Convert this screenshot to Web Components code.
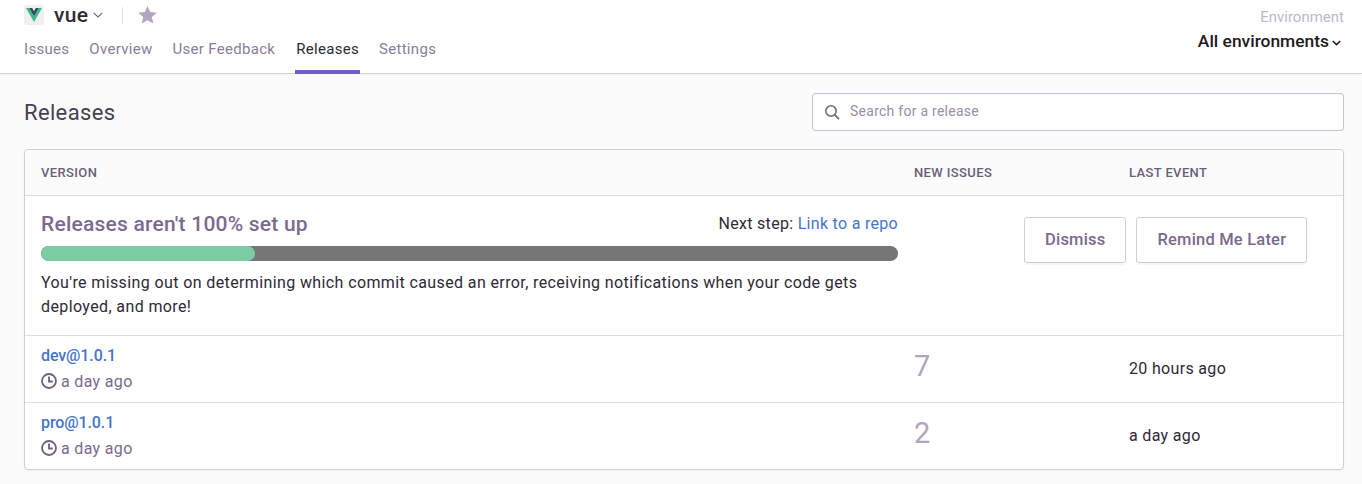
<!DOCTYPE html>
<html>
<head>
<meta charset="utf-8">
<title>Releases</title>
<style>
  html, body { margin:0; height:100%; overflow:hidden; }
  body { background:#fbfbfc; font-family:Roboto,"Liberation Sans",sans-serif; color:#2f2936; }
</style>
</head>
<body>
<project-header></project-header>
<main-content>
  <release-progress slot="progress"></release-progress>
  <release-row slot="rows" version="dev@1.0.1" age="a day ago" issues="7" last="20 hours ago"></release-row>
  <release-row slot="rows" version="pro@1.0.1" age="a day ago" issues="2" last="a day ago"></release-row>
</main-content>

<script>
const defineShadow = (name, html, setup) => {
  customElements.define(name, class extends HTMLElement {
    constructor() {
      super();
      this.attachShadow({mode:"open"}).innerHTML = html;
      if (setup) setup(this);
    }
  });
};

defineShadow("project-header", `
  <style>
    :host { display:flex; justify-content:space-between; height:73px; padding:0 18px 0 24px; background:#fff; border-bottom:1px solid #d6d0dc; box-shadow:0 1px 2px rgba(0,0,0,.04); }
    .left { display:flex; flex-direction:column; }
    .title { display:flex; align-items:center; height:20px; margin-top:5px; }
    .logo { width:20px; height:20px; border-radius:3px; background:#efeef3; display:flex; align-items:center; justify-content:center; }
    .name { margin-left:10px; font-size:21px; font-weight:500; color:#2f2936; line-height:20px; letter-spacing:.3px; }
    .caret { margin-left:5px; }
    .sep { width:1px; height:17px; background:#e4e1e8; margin:0 15px 0 19px; }
    nav { display:flex; gap:20px; margin-top:12px; }
    nav a { display:block; height:37px; line-height:24px; font-size:15px; color:#8a7c9c; white-space:nowrap; letter-spacing:.3px; box-sizing:border-box; }
    nav a.on { color:#2f2936; border-bottom:4px solid #6c5fc7; padding:0 1px; margin-right:-1px; }
    .env { text-align:right; display:flex; flex-direction:column; align-items:flex-end; }
    .env-label { font-size:15px; color:#c1b8cc; line-height:18px; margin-top:8px; }
    .env-val { display:flex; align-items:center; font-size:17.400px; font-weight:500; color:#1d1a21; line-height:20px; margin-top:5px; margin-right:3px; }
    .env-val svg { margin-left:3px; margin-top:3px; }
  </style>
  <div class="left">
    <div class="title">
      <span class="logo">
        <svg width="16" height="14" viewBox="0 0 16 14"><path d="M0 0h3.2L8 8.2 12.800 0H16L8 14z" fill="#41b883"/><path d="M3.200 0h3L8 3.200 9.800 0h3L8 8.200z" fill="#35495e"/></svg>
      </span>
      <span class="name">vue</span>
      <svg class="caret" width="10" height="6" viewBox="0 0 10 6"><path d="M.7.8 5 5 9.300.8" fill="none" stroke="#6f6378" stroke-width="1.100"/></svg>
      <span class="sep"></span>
      <svg width="19" height="18" viewBox="0 0 19 18"><path d="M9.500 0l2.700 6.100 6.600.6-5 4.400 1.500 6.500-5.800-3.400-5.800 3.400 1.500-6.500-5-4.400 6.600-.6z" fill="#b1a5c0"/></svg>
    </div>
    <nav>
      <a>Issues</a><a>Overview</a><a>User Feedback</a><a class="on">Releases</a><a>Settings</a>
    </nav>
  </div>
  <div class="env">
    <div class="env-label">Environment</div>
    <div class="env-val">All environments<svg width="9" height="6" viewBox="0 0 9 6"><path d="M.8 1l3.700 3.600L8.200 1" fill="none" stroke="#1d1a21" stroke-width="1.500"/></svg></div>
  </div>
`);

defineShadow("search-box", `
  <style>
    :host { display:flex; align-items:center; width:530px; height:36px; background:#fff; border:1px solid #c9c2d2; border-radius:3px; box-shadow:inset 0 1px 2px rgba(0,0,0,.03); }
    svg { margin-left:11px; }
    span { margin-left:10px; font-size:14px; color:#9a8ea8; letter-spacing:.26px; position:relative; top:-1px; }
  </style>
  <svg width="16" height="16" viewBox="0 0 16 16"><circle cx="7" cy="7" r="5.200" fill="none" stroke="#756a80" stroke-width="1.600"/><path d="M10.800 10.800l3.700 3.900" stroke="#756a80" stroke-width="1.800" stroke-linecap="round"/></svg>
  <span>Search for a release</span>
`);

defineShadow("main-content", `
  <style>
    :host { display:block; padding:19px 18px 0 24px; }
    .top { display:flex; justify-content:space-between; align-items:center; height:38px; }
    h1 { margin:0; font-size:22px; font-weight:400; color:#493e54; letter-spacing:.35px; }
    .panel { margin-top:18px; background:#fff; border:1px solid #d3cdd9; border-radius:4px; box-shadow:0 1px 2px rgba(0,0,0,.05); }
    .head { display:grid; grid-template-columns:873px 215px 1fr; height:45px; align-items:center; padding-left:16px; background:#fbfbfc; border-bottom:1px solid #dedae3; border-radius:4px 4px 0 0; font-size:13px; font-weight:500; color:#6b5f78; letter-spacing:.38px; }
  </style>
  <div class="top"><h1>Releases</h1><search-box></search-box></div>
  <div class="panel">
    <div class="head"><span>VERSION</span><span>NEW ISSUES</span><span>LAST EVENT</span></div>
    <slot name="progress"></slot>
    <slot name="rows"></slot>
  </div>
`);

defineShadow("release-progress", `
  <style>
    :host { display:flex; height:139px; padding-left:16px; border-bottom:1px solid #e2dee7; box-sizing:content-box; }
    .col { width:857px; flex:none; }
    .top { display:flex; justify-content:space-between; align-items:center; margin-top:14px; height:28px; }
    h2 { margin:0; font-size:21px; font-weight:500; color:#7c6a8e; letter-spacing:.22px; }
    .next { font-size:16px; color:#2f2936; letter-spacing:.3px; position:relative; top:-1px; }
    .next a { color:#4674ca; }
    .bar { height:15px; margin-top:8px; border-radius:8px; background:#767676; overflow:hidden; }
    .fill { width:214px; height:100%; border-radius:8px; background:#7ccca5; }
    p { margin:10px 0 0; font-size:16px; line-height:24px; color:#2f2936; letter-spacing:.385px; }
    .actions { display:flex; gap:10px; margin:21px 0 0 126px; align-items:flex-start; }
  </style>
  <div class="col">
    <div class="top"><h2>Releases aren't 100% set up</h2><span class="next">Next step: <a>Link to a repo</a></span></div>
    <div class="bar"><div class="fill"></div></div>
    <p>You're missing out on determining which commit caused an error, receiving notifications when your code gets<br>deployed, and more!</p>
  </div>
  <div class="actions"><action-button>Dismiss</action-button><action-button>Remind Me Later</action-button></div>
`);

defineShadow("action-button", `
  <style>
    :host { display:flex; align-items:center; justify-content:center; height:44px; padding:0 20px; background:#fff; border:1px solid #d3cdd9; border-radius:3px; box-shadow:0 2px 1px rgba(0,0,0,.04); font-size:16.500px; font-weight:500; letter-spacing:.2px; color:#7c6a8e; white-space:nowrap; }
    span { position:relative; top:-1px; }
  </style>
  <span><slot></slot></span>
`);

defineShadow("release-row", `
  <style>
    :host { display:grid; grid-template-columns:873px 215px 1fr; height:66px; padding-left:16px; border-bottom:1px solid #e2dee7; align-items:center; }
    :host(:last-child) { border-bottom:0; }
    .v { font-size:16px; font-weight:500; color:#4674ca; line-height:20px; margin-top:-1px; letter-spacing:-.1px; }
    .age { display:flex; align-items:center; gap:4px; font-size:16px; color:#7c6a8e; line-height:20px; margin-top:6px; letter-spacing:.33px; }
    .age svg { position:relative; top:-1px; }
    .n { font-size:29px; color:#b1a5c0; position:relative; top:-3px; }
    .l { font-size:16px; color:#2f2936; position:relative; top:-1px; letter-spacing:.33px; }
  </style>
  <div>
    <div class="v" id="v"></div>
    <div class="age"><svg width="16" height="16" viewBox="0 0 16 16"><circle cx="8" cy="8" r="7" fill="none" stroke="#6f6080" stroke-width="1.800"/><path d="M8 3.500V8.500H11.800" fill="none" stroke="#6f6080" stroke-width="1.800"/></svg><span id="a"></span></div>
  </div>
  <div class="n" id="n"></div>
  <div class="l" id="l"></div>
`, el => {
  const s = el.shadowRoot;
  s.getElementById("v").textContent = el.getAttribute("version");
  s.getElementById("a").textContent = el.getAttribute("age");
  s.getElementById("n").textContent = el.getAttribute("issues");
  s.getElementById("l").textContent = el.getAttribute("last");
});
</script>
</body>
</html>
